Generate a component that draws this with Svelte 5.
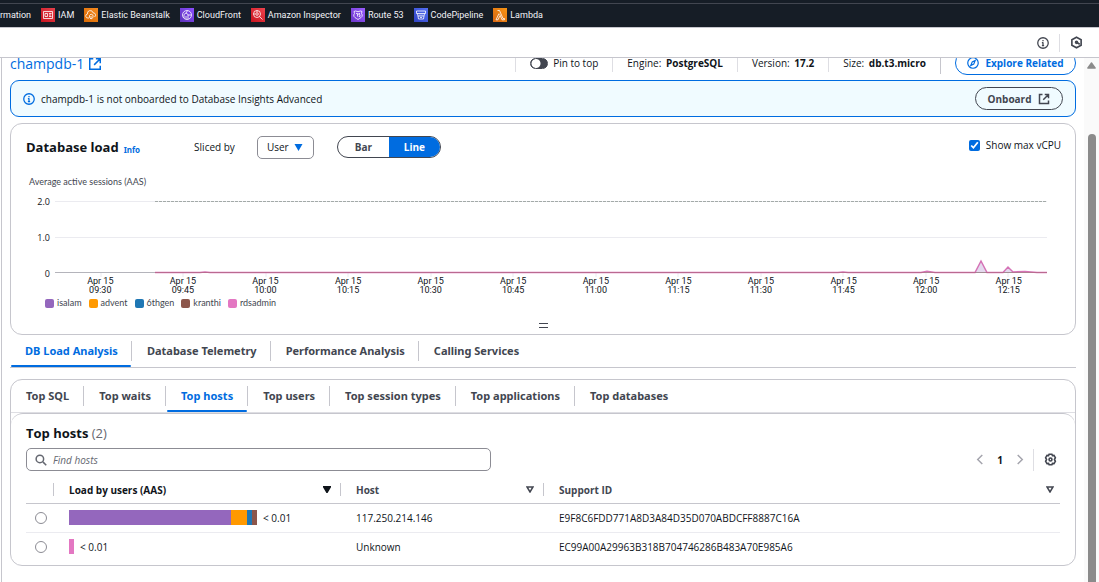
<script>
  const bookmarks = [
    { name: 'IAM', icon: 'iam', from: '#e7404b', to: '#c7131f' },
    { name: 'Elastic Beanstalk', icon: 'beanstalk', from: '#f58a1f', to: '#d96a04' },
    { name: 'CloudFront', icon: 'cloudfront', from: '#8c4fff', to: '#5b30b8' },
    { name: 'Amazon Inspector', icon: 'inspector', from: '#f0434d', to: '#c7131f' },
    { name: 'Route 53', icon: 'route', from: '#9a5cff', to: '#6b35c9' },
    { name: 'CodePipeline', icon: 'pipeline', from: '#5470f5', to: '#3043c4' },
    { name: 'Lambda', icon: 'lambda', from: '#f79413', to: '#d86613' }
  ];

  const times = ['09:30', '09:45', '10:00', '10:15', '10:30', '10:45', '11:00', '11:15', '11:30', '11:45', '12:00', '12:15'];

  const users = [
    { name: 'isalam', color: '#9467bd' },
    { name: 'advent', color: '#ff9900' },
    { name: '6thgen', color: '#1f77b4' },
    { name: 'kranthi', color: '#8c564b' },
    { name: 'rdsadmin', color: '#e377c2' }
  ];

  const tabs = ['DB Load Analysis', 'Database Telemetry', 'Performance Analysis', 'Calling Services'];
  const dimensions = ['Top SQL', 'Top waits', 'Top hosts', 'Top users', 'Top session types', 'Top applications', 'Top databases'];

  const hosts = [
    {
      host: '117.250.214.146',
      id: 'E9F8C6FDD771A8D3A84D35D070ABDCFF8887C16A',
      bars: [[0, 162], [1, 16], [2, 5], [3, 5]]
    },
    { host: 'Unknown', id: 'EC99A00A29963B318B704746286B483A70E985A6', bars: [[4, 5]] }
  ];

  let tab = $state(0);
  let dimension = $state(2);
  let chartType = $state('Line');
</script>

{#snippet external()}
  <svg class="ext" viewBox="0 0 16 16" aria-hidden="true">
    <path d="M6 2H2v12h12v-4M9 2h5v5M14 2 7 9" />
  </svg>
{/snippet}

{#snippet info()}
  <svg class="info-icon" viewBox="0 0 16 16" aria-hidden="true">
    <circle cx="8" cy="8" r="7" />
    <path d="M8 7v5M6.5 7.5H8M6.5 11.5h3M8 4v1.6" />
  </svg>
{/snippet}

<div class="page">
  <nav class="bookmarks" aria-label="Favorites">
    <a href="#information">rmation</a>
    {#each bookmarks as b}
      <a href="#{b.icon}">
        <span class="service" style="background: linear-gradient(45deg, {b.to}, {b.from})">
          <svg viewBox="0 0 14 14" aria-hidden="true">
            {#if b.icon === 'iam'}
              <path d="M2.5 3.5h9v7h-9zM4 5.5h2.5v3H4zM8 5.5h2.500M8 7h2M8 8.500h2.500" />
            {:else if b.icon === 'beanstalk'}
              <path d="M5 10H4a2 2 0 0 1-.5-4 2.800 2.800 0 0 1 5.500-1.200A2.300 2.300 0 0 1 10.500 9M7 6l2 1.200v2.300L7 11l-1.500-1.500v-2zM7 8v3" />
            {:else if b.icon === 'cloudfront'}
              <circle cx="7" cy="7" r="4.500" />
              <path d="M4 10V6.500l2-1.500 2 1.500V11M6 5l1.500-2.300M8 7h3.200M6 8v3" />
            {:else if b.icon === 'inspector'}
              <circle cx="6" cy="6" r="3.500" />
              <circle cx="6" cy="6" r="1.300" />
              <path d="m8.500 8.500 3 3M2.500 6H4M6 2.500V4" />
            {:else if b.icon === 'route'}
              <path d="M3 3.500 4.500 3l2.500.7L9.500 3l1.500.5-.5 2 .8 1.500c0 2.500-2.300 3-4.300 4.500C5 10 2.700 9.500 2.700 7l.8-1.500zM5 5.500h1.500v3M9 5.500H7.800v1.300H9v1.700H7.800" />
            {:else if b.icon === 'pipeline'}
              <path d="M2.500 3h9v2.500h-9zM3.500 5.500 4.500 11h5l1-5.500M4 8h6M6 6.500v1M8 6.500v1M6 9.500h2" />
            {:else}
              <path d="M4.500 2.500h2l3.500 8h1.500v1.300H9L6.700 6.200M6 5.500 3 11.800h2l1.700-3.700" />
            {/if}
          </svg>
        </span>
        {b.name}
      </a>
    {/each}
  </nav>

  <div class="utility">
    <button aria-label="Info">{@render info()}</button>
    <span class="rule"></span>
    <button aria-label="Amazon Q">
      <svg class="hex" viewBox="0 0 16 16" aria-hidden="true">
        <path d="m8 1.500 5.700 3.200v6.600L8 14.500l-5.700-3.200V4.700z" />
        <path d="m8.500 8 3.500 2.200" />
        <circle cx="8" cy="7.800" r="1.200" />
      </svg>
    </button>
  </div>

  <div class="body">
    <main>
      <header class="resource">
        <a class="title" href="#champdb-1">champdb-1 {@render external()}</a>
        <div class="facts">
          <label class="fact pin"><input type="checkbox" role="switch" />Pin to top</label>
          <span class="fact">Engine: <b>PostgreSQL</b></span>
          <span class="fact">Version: <b>17.2</b></span>
          <span class="fact">Size: <b>db.t3.micro</b></span>
        </div>
        <span class="last-rule"></span>
        <button class="explore">
          <svg viewBox="0 0 16 16" aria-hidden="true"><circle cx="8" cy="8" r="7" /><path d="m11 4.500-2 5-4 2 2-5z" /></svg>
          Explore Related
        </button>
      </header>

      <section class="alert">
        {@render info()}
        <span>champdb-1 is not onboarded to Database Insights Advanced</span>
        <button>Onboard {@render external()}</button>
      </section>

      <section class="card load">
        <div class="load-head">
          <h2>Database load</h2>
          <a class="info-link" href="#info">Info</a>
          <label class="sliced" for="slice">Sliced by</label>
          <span class="select">
            <select id="slice"><option>User</option><option>Host</option><option>SQL</option></select>
            <svg viewBox="0 0 8 7" aria-hidden="true"><path d="M0 0h8L4 7z" /></svg>
          </span>
          <div class="segments">
            {#each ['Bar', 'Line'] as type}
              <button class:on={chartType === type} onclick={() => (chartType = type)}>{type}</button>
            {/each}
          </div>
          <label class="vcpu">
            <input type="checkbox" checked />
            Show max vCPU
          </label>
        </div>

        <div class="axis-title">Average active sessions (AAS)</div>
        <div class="chart">
          <div class="y-axis"><span>2.0</span><span>1.0</span><span>0</span></div>
          <svg class="plot" viewBox="0 0 992 76" preserveAspectRatio="none" aria-hidden="true">
            <path class="grid" d="M0 .5H992M0 36.500H992" />
            <path class="base" d="M0 71.500H992" />
            <path class="max" d="M100 .5H992" />
            <path class="ticks" d="M46 72v4M128 72v4M211 72v4M293 72v4M376 72v4M458 72v4M541 72v4M623 72v4M706 72v4M788 72v4M871 72v4M953 72v4" />
            <path class="area" d="M920 71.500 926 60l6 11.500zM948 71.500l5-5.500 6 5.500z" />
            <path class="line" d="M100 71.500H145L150 71l5 .5H783l5-.5 5 .5H866l6-1.200 8 1.200H920L926 60l6 11.500H948l5-5.500 5 5 12-.6 12 1.100H992" />
            <path class="under" d="M100 71.500H992" />
          </svg>
        </div>
        <div class="x-axis">
          {#each times as t}<span>Apr 15<br />{t}</span>{/each}
        </div>
        <ul class="legend">
          {#each users as u}<li><i style="background: {u.color}"></i>{u.name}</li>{/each}
        </ul>
        <button class="resize" aria-label="Resize chart"></button>
      </section>

      <nav class="tabs outer">
        {#each tabs as t, i}
          <button class:active={tab === i} onclick={() => (tab = i)}>{t}</button>
        {/each}
      </nav>

      <section class="card analysis">
        <nav class="tabs">
          {#each dimensions as t, i}
            <button class:active={dimension === i} onclick={() => (dimension = i)}>{t}</button>
          {/each}
        </nav>
        <div class="panel">
          <h2>Top hosts <span>(2)</span></h2>
          <div class="tools">
            <label class="search">
              <svg viewBox="0 0 16 16" aria-hidden="true"><circle cx="6.500" cy="6.500" r="5" /><path d="m10.500 10.500 4.500 4.500" /></svg>
              <input type="search" placeholder="Find hosts" aria-label="Find hosts" />
            </label>
            <div class="pager">
              <button class="arrow" aria-label="Previous page"><svg viewBox="0 0 8 12"><path d="M6.500 1 1.500 6l5 5" /></svg></button>
              <button class="current">1</button>
              <button class="arrow" aria-label="Next page"><svg viewBox="0 0 8 12"><path d="m1.500 1 5 5-5 5" /></svg></button>
              <span class="rule"></span>
              <button class="gear" aria-label="Preferences">
                <svg viewBox="0 0 16 16">
                  <path d="M6.300 1.500h3.400l.7 1.700 1.900-.3 1.700 2.900L12.900 8l1.100 2.200-1.700 2.900-1.900-.3-.7 1.700H6.300l-.7-1.700-1.900.3L2 10.200 3.100 8 2 5.800l1.700-2.900 1.900.3z" />
                  <circle cx="8" cy="8" r="1.800" />
                </svg>
              </button>
            </div>
          </div>
          <table>
            <thead>
              <tr>
                <th class="pick" aria-label="Select"></th>
                <th class="users"><div class="sorted">Load by users (AAS)<svg viewBox="0 0 8 7"><path d="M.5.500h7L4 6.500z" fill="currentColor" /></svg></div></th>
                <th class="host"><div>Host<svg viewBox="0 0 8 7"><path d="M1 1h6L4 6z" /></svg></div></th>
                <th><div>Support ID<svg viewBox="0 0 8 7"><path d="M1 1h6L4 6z" /></svg></div></th>
              </tr>
            </thead>
            <tbody>
              {#each hosts as h}
                <tr>
                  <td class="pick"><input type="radio" name="host" aria-label={h.host} /></td>
                  <td>
                    <div class="bar">
                      {#each h.bars as [u, w]}<i style="width: {w}px; background: {users[u].color}"></i>{/each}
                      <span>&lt; 0.01</span>
                    </div>
                  </td>
                  <td>{h.host}</td>
                  <td>{h.id}</td>
                </tr>
              {/each}
            </tbody>
          </table>
        </div>
      </section>
    </main>
    <div class="scroll" aria-hidden="true">
      <svg viewBox="0 0 10 7"><path d="M5 0c.5 0 .8.3 1 .6L9.800 6c.2.5 0 1-.6 1H.8C.2 7 0 6.500.2 6L4 .6C4.200.300 4.500 0 5 0z" /></svg>
      <div class="thumb"></div>
    </div>
  </div>
</div>

<style>
  :global(body) { background: #fff; }
  .page {
    font: 10px/14px "Open Sans", "Noto Sans", sans-serif;
    color: #0f141a;
    height: 100vh;
    display: flex;
    flex-direction: column;
    overflow: hidden;
  }
  .page :global(*) { box-sizing: border-box; }
  button, input, select { font: inherit; color: inherit; margin: 0; }
  button { background: none; border: 0; padding: 0; cursor: pointer; }
  a { color: #006ce0; text-decoration: none; }
  svg { fill: none; stroke: currentColor; stroke-width: 2; flex: none; }
  h2 { font-size: 13px; line-height: 18px; margin: 0; }

  .bookmarks {
    flex: none;
    height: 28px;
    padding-top: 3px;
    border-bottom: 1px solid #c6c6cd;
    background: linear-gradient(#161d26 3px, #424650 3px, #424650 4px, #161d26 4px);
    display: flex;
    align-items: center;
    gap: 10px;
  }
  .bookmarks a {
    display: flex;
    align-items: center;
    gap: 3px;
    color: #f3f3f7;
    font: 9px/14px Roboto, sans-serif;
    white-space: nowrap;
  }
  .service { width: 14px; height: 14px; display: flex; }
  .service svg { width: 14px; height: 14px; stroke: #fff; stroke-width: .8; }

  .utility {
    flex: none;
    height: 30px;
    border-bottom: 1px solid #c6c6cd;
    display: flex;
    align-items: center;
    justify-content: flex-end;
    gap: 10px;
    padding-right: 16px;
    color: #424650;
  }
  .utility button { display: flex; }
  .rule { width: 1px; height: 18px; background: #dedee3; }
  .info-icon { width: 12px; height: 12px; stroke-width: 1.7; }
  .hex { width: 13px; height: 13px; }

  .body { flex: 1; min-height: 0; display: flex; }
  main {
    flex: 1;
    min-width: 0;
    overflow: hidden;
    margin-left: 1px;
    border-left: 1px solid #c6c6cd;
    padding: 0 8px;
  }

  .resource { height: 17px; margin-bottom: 5px; display: flex; }
  .title { font-size: 14px; line-height: 11px; display: flex; align-items: center; gap: 4px; height: 11px; margin-right: auto; }
  .title .ext { width: 14px; height: 14px; stroke-width: 1.7; }
  .facts { display: flex; height: 14px; line-height: 10px; white-space: nowrap; }
  .fact { border-left: 1px solid #dedee3; padding: 0 14px; }
  .fact b { margin-left: 2px; }
  .pin { display: flex; align-items: center; gap: 5px; padding-bottom: 4px; }
  .pin input {
    appearance: none;
    width: 18px;
    height: 11px;
    border-radius: 6px;
    border: 1px solid #424650;
    background: radial-gradient(circle at 5px 50%, #fff 4px, #424650 5px);
  }
  .last-rule { width: 1px; height: 16px; background: #c6c6cd; margin-right: 14px; }
  .explore {
    align-self: flex-end;
    height: 24px;
    width: 121px;
    flex: none;
    border: 1px solid #006ce0;
    border-radius: 12px;
    color: #006ce0;
    font-weight: 700;
    display: flex;
    align-items: center;
    justify-content: center;
    gap: 6px;
  }
  .explore svg { width: 12px; height: 12px; stroke-width: 1.6; }

  .alert {
    height: 37px;
    border: 1px solid #006ce0;
    border-radius: 9px;
    background: #f0fbff;
    display: flex;
    align-items: center;
    gap: 6px;
    padding: 0 12px;
  }
  .alert > .info-icon { color: #006ce0; }
  .alert button {
    margin-left: auto;
    height: 23px;
    width: 88px;
    border: 1px solid #424650;
    border-radius: 12px;
    color: #424650;
    font-weight: 700;
    display: flex;
    align-items: center;
    justify-content: center;
    gap: 7px;
  }
  .alert .ext { width: 12px; height: 12px; }

  .card { border: 1px solid #c6c6cd; border-radius: 12px; }
  .load { margin-top: 6px; height: 212px; padding: 11px 14px 0; display: flex; flex-direction: column; }
  .load-head { display: flex; align-items: center; height: 24px; white-space: nowrap; padding-left: 1px; }
  .info-link { font: 700 8px/12px "Noto Sans", sans-serif; margin: 5px 54px 0 5px; }
  .sliced { margin-right: 22px; }
  .select { position: relative; display: flex; }
  .select select {
    appearance: none;
    width: 57px;
    height: 23px;
    border: 1px solid #8c8c94;
    border-radius: 5px;
    background: #fff;
    padding: 0 0 0 9px;
  }
  .select svg { position: absolute; right: 11px; top: 8px; width: 9px; height: 7px; fill: #006ce0; stroke: none; pointer-events: none; }
  .segments { display: flex; margin-left: 23px; height: 22px; border: 1px solid #424650; border-radius: 11px; overflow: hidden; }
  .segments button { width: 51px; color: #424650; font-weight: 700; }
  .segments .on { background: #006ce0; color: #fff; }
  .vcpu { margin-left: auto; display: flex; align-items: center; gap: 6px; margin-bottom: 4px; }
  .vcpu input { width: 11px; height: 11px; accent-color: #006ce0; }

  .axis-title { font: 9px/12px Lato, sans-serif; color: #424650; margin: 17px 0 0 4px; }
  .chart { display: flex; margin: 13px 14px 0 0; height: 76px; }
  .y-axis { width: 30px; flex: none; padding-right: 5px; text-align: right; font-size: 9px; line-height: 12px; margin-top: -5px; }
  .y-axis span { display: block; height: 36px; }
  .plot { flex: 1; min-width: 0; height: 76px; overflow: visible; stroke-width: 1; }
  .plot path { vector-effect: non-scaling-stroke; }
  .grid { stroke: #ebebf0; }
  .base { stroke: #b4b4bb; }
  .max { stroke: #a3aaa8; stroke-dasharray: 3 1; }
  .ticks { stroke: #ebebf0; }
  .area { fill: #9467bd; fill-opacity: .25; stroke: none; }
  .under { stroke: #8c564b; stroke-opacity: .35; }
  .line { stroke: #d573b6; stroke-width: 1.500; }
  .x-axis { display: grid; grid-template-columns: repeat(12, 1fr); margin: 0 11px 0 34px; text-align: center; font: 9px/9px Roboto, sans-serif; }
  .legend { list-style: none; display: flex; gap: 7px; margin: 2px 0 0 20px; padding: 0; font: 9px/12px Lato, sans-serif; color: #424650; }
  .legend li { display: flex; align-items: center; gap: 3px; }
  .legend i { width: 9px; height: 9px; border-radius: 2px; }
  .resize { align-self: center; width: 9px; height: 5px; margin-top: auto; margin-bottom: 6px; border: solid #424650; border-width: 1px 0; }

  .tabs { display: flex; }
  .tabs button {
    position: relative;
    font: 700 11px/20px "Noto Sans", sans-serif;
    color: #424650;
    padding: 6px 15px;
    white-space: nowrap;
  }
  .outer button { padding: 6px 14px 6px 15px; }
  .tabs button:not(:last-child)::before { content: ""; position: absolute; right: 0; top: 6px; height: 20px; width: 1px; background: #c6c6cd; }
  .tabs .active { color: #006ce0; }
  .tabs .active::after { content: ""; position: absolute; left: 1px; right: 1px; bottom: 0; height: 2px; background: #006ce0; border-radius: 1px; }
  .outer { border-bottom: 1px solid #c6c6cd; }

  .analysis { margin-top: 11px; height: 187px; display: flex; flex-direction: column; }
  .analysis .tabs { border-bottom: 1px solid #dedee3; }
  .panel { flex: 1; border-top: 1px solid #c6c6cd; border-radius: 12px; padding: 10px 15px 0; }
  .panel h2 span { font-weight: 400; color: #656871; }
  .tools { display: flex; justify-content: space-between; align-items: center; margin-top: 6px; }
  .search { width: 45%; height: 23px; border: 1px solid #8c8c94; border-radius: 5px; display: flex; align-items: center; gap: 6px; padding: 0 8px; color: #656871; }
  .search svg { width: 12px; height: 12px; }
  .search input { flex: 1; min-width: 0; border: 0; outline: 0; padding: 0; background: none; }
  .search input::placeholder { font-style: italic; color: #656871; opacity: 1; }
  .pager { display: flex; align-items: center; color: #424650; padding-right: 3px; }
  .pager button { display: flex; }
  .arrow svg { width: 8px; height: 11px; color: #a4a4ad; stroke-width: 1.600; }
  .current { font-weight: 700; margin: 0 13px; color: #0f141a; }
  .pager .rule { height: 22px; margin: 0 10px 0 9px; }
  .gear svg { width: 13px; height: 13px; }

  table { width: 100%; border-collapse: collapse; table-layout: fixed; margin-top: 6px; }
  th { height: 26px; padding: 0; text-align: left; color: #424650; border-bottom: 1px solid #c6c6cd; }
  th:not(:last-child) { background: linear-gradient(#c6c6cd, #c6c6cd) right center / 1px 13px no-repeat; }
  th div { display: flex; justify-content: space-between; align-items: center; padding: 0 10px 0 15px; }
  th:last-child div { padding-right: 6px; }
  th svg { width: 8px; height: 7px; stroke-width: 1.500; }
  .sorted { color: #0f141a; }
  th.pick { width: 28px; }
  th.users { width: 287px; }
  th.host { width: 203px; }
  td { height: 29px; padding: 0 0 0 15px; border-bottom: 1px solid #ebebf0; }
  tr:last-child td { border-bottom: 0; }
  td.pick { padding: 0 0 0 9px; }
  td input { appearance: none; display: block; width: 12px; height: 12px; border: 1px solid #8c8c94; border-radius: 50%; }
  .bar { display: flex; align-items: center; }
  .bar i { height: 15px; }
  .bar span { margin-left: 6px; }

  .scroll { width: 15px; flex: none; background: #fafafa; display: flex; flex-direction: column; align-items: center; padding-top: 4px; }
  .scroll svg { width: 9px; height: 7px; fill: #8b8b8b; stroke: none; }
  .thumb { flex: 1; width: 8px; margin-top: 65px; background: #8b8b8b; border-radius: 4px 4px 0 0; }
</style>
